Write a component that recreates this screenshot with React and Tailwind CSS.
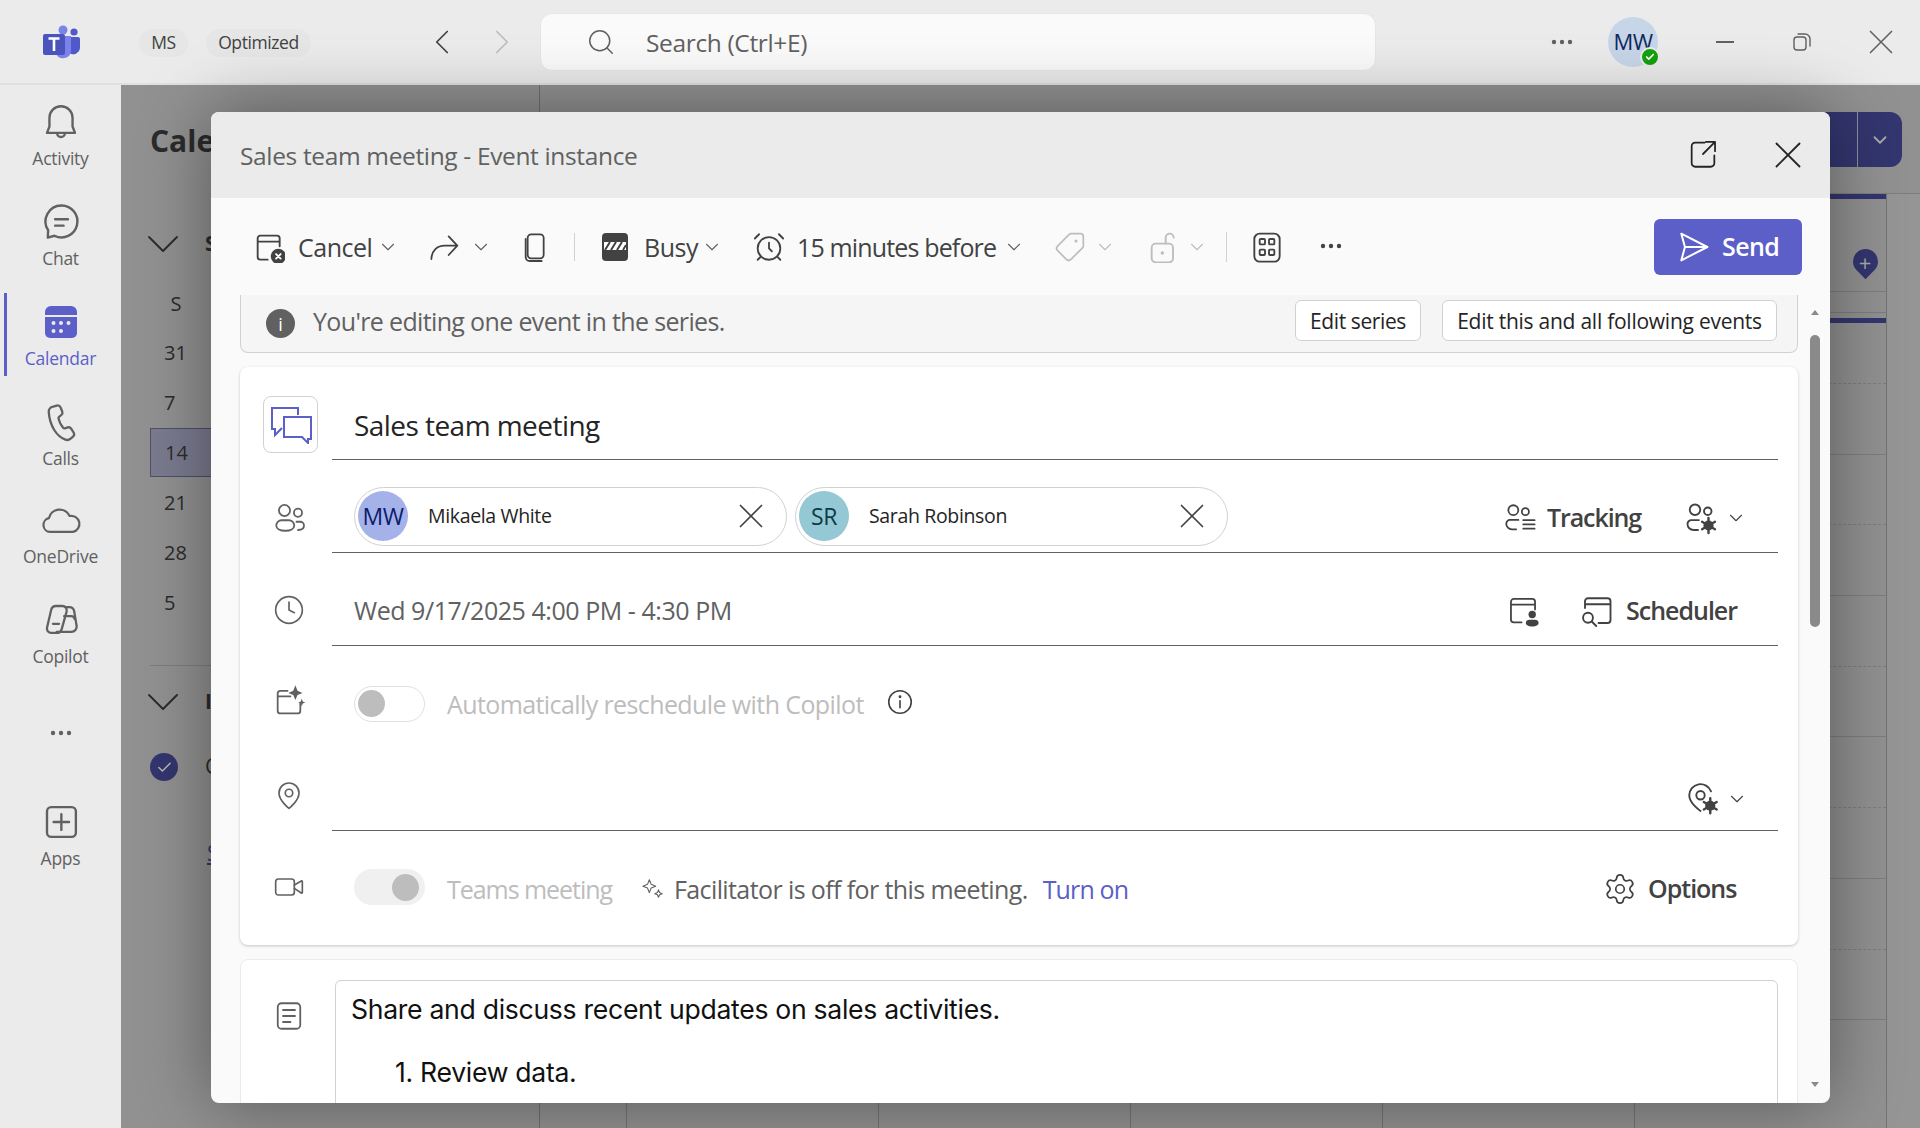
import { AlarmClock, Check, ChevronDown, ChevronLeft, ChevronRight, Clock, Search, Settings, Tag, Video, X } from "lucide-react";

const Svg = ({ size, h, className = "", sw = 1.5, vb = "0 0 24 24", children }) => (
  <svg width={size} height={h || size} viewBox={vb} fill="none" stroke="currentColor" strokeWidth={sw} strokeLinecap="round" strokeLinejoin="round" className={`shrink-0 ${className}`}>
    {children}
  </svg>
);

const Dots = ({ className = "" }) => (
  <svg width="24" height="6" viewBox="0 0 24 6" className={`shrink-0 ${className}`} fill="currentColor">
    <circle cx="4" cy="3" r="2.2" />
    <circle cx="12" cy="3" r="2.2" />
    <circle cx="20" cy="3" r="2.2" />
  </svg>
);

const TeamsLogo = () => (
  <svg width="38" height="34" viewBox="0 0 38 34" className="shrink-0">
    <circle cx="21" cy="5" r="4.5" fill="#7b83eb" />
    <circle cx="32" cy="7" r="3.6" fill="#5059c9" />
    <path d="M27 12h9a2 2 0 0 1 2 2v9a7 7 0 0 1-11 5Z" fill="#5059c9" />
    <path d="M14 11h15v15a8 8 0 0 1-15 3Z" fill="#7b83eb" />
    <rect x="1" y="9" width="22" height="21" rx="2" fill="#4b53bc" />
    <path d="M6.5 13.5h11M12 13.5V26" stroke="#fff" strokeWidth="2.6" fill="none" />
  </svg>
);

const navIcons = {
  Activity: (
    <Svg size={42} sw={1.35}>
      <path d="M12 3a6.6 6.6 0 0 0-6.6 6.6v5L4 18.2h16l-1.4-3.6v-5A6.6 6.6 0 0 0 12 3Z" />
      <path d="M9.8 18.4a2.2 2.2 0 0 0 4.4 0" />
    </Svg>
  ),
  Chat: (
    <Svg size={44} sw={1.3}>
      <path d="M12.3 3a8.7 8.7 0 1 1-3.9 16.5l-3.6 1 .2-4A8.7 8.7 0 0 1 12.3 3Z" />
      <path d="M8.8 10.5h7M8.8 14h4.6" />
    </Svg>
  ),
  Calendar: (
    <svg width="34" height="34" viewBox="0 0 34 34" className="shrink-0">
      <path d="M1 7a6 6 0 0 1 6-6h20a6 6 0 0 1 6 6v3H1Z" fill="#5b5fc7" />
      <path d="M1 12h32v16a5 5 0 0 1-5 5H6a5 5 0 0 1-5-5Z" fill="#5b5fc7" />
      <g fill="#ebebeb">
        <circle cx="9.5" cy="18" r="2" /><circle cx="17" cy="18" r="2" /><circle cx="24.5" cy="18" r="2" />
        <circle cx="9.5" cy="26" r="2" /><circle cx="17" cy="26" r="2" />
      </g>
    </svg>
  ),
  Calls: (
    <Svg size={42} sw={1.3}>
      <path d="M7.5 3.2 9.6 2.6a1.8 1.8 0 0 1 2.1 1l1 2.4a1.8 1.8 0 0 1-.5 2l-1.3 1.1a1 1 0 0 0-.3 1c.5 2 1.4 3.7 2.6 5.2a1 1 0 0 0 1 .3l1.6-.5a1.8 1.8 0 0 1 2 .7l1.4 2.2a1.8 1.8 0 0 1-.3 2.3l-1.4 1.2a3 3 0 0 1-3 .6C9.6 20.3 5.6 14.4 5 6.4a3 3 0 0 1 2.5-3.2Z" />
    </Svg>
  ),
  OneDrive: (
    <Svg size={44} sw={1.2}>
      <path d="M6 18.5a3.8 3.8 0 0 1-.6-7.5 6 6 0 0 1 11.3-1.2 4.4 4.4 0 0 1 1.8 8.7Z" />
    </Svg>
  ),
  Copilot: (
    <Svg size={42} sw={1.3}>
      <path d="M9.2 4h3.6a2.5 2.5 0 0 1 2.4 3.2L12.4 17.2a3 3 0 0 1-2.9 2.2H6.4A2.5 2.5 0 0 1 4 16.4L6.4 6.2A2.8 2.8 0 0 1 9.2 4Z" />
      <path d="M14.8 4.6h2a2.8 2.8 0 0 1 2.7 2.2l1.4 8.4a3 3 0 0 1-3 3.6H9.6" />
      <path d="M13.8 9.8h4a2 2 0 0 1 2 1.6M7.4 14.2h3.5" />
    </Svg>
  ),
  Apps: (
    <Svg size={42} sw={1.35}>
      <rect x="4" y="3.5" width="16.5" height="17" rx="2.4" />
      <path d="M12.2 7.5v9M7.8 12h8.8" />
    </Svg>
  ),
};

function NavItem({ label, active, h = "h-[100px]" }) {
  return (
    <div className={`relative flex ${h} flex-col items-center pt-[10px] ${active ? "text-[#5b5fc7]" : "text-[#616161]"}`}>
      {active && <div className="absolute left-[4px] top-0 h-[83px] w-[3px] bg-[#5b5fc7]" />}
      <div className="flex h-[38px] items-center justify-center">{navIcons[label]}</div>
      <div className="mt-[5px] text-[17.5px] leading-[24px] tracking-[-0.25px]">{label}</div>
    </div>
  );
}

function TitleBar() {
  return (
    <div className="flex h-[85px] shrink-0 items-center border-b-2 border-[#e0e0e0] bg-[#ebebeb] text-[#424242]">
      <div className="ml-[42px] w-[97px]"><TeamsLogo /></div>
      <div className="mt-[2px] flex h-[28px] w-[49px] items-center justify-center rounded-full bg-[#e6e6e6] text-[17.5px] tracking-[-0.4px]">MS</div>
      <div className="ml-[18px] mt-[2px] flex h-[28px] w-[105px] items-center justify-center rounded-full bg-[#e6e6e6] text-[17.5px] tracking-[-0.4px]">Optimized</div>
      <ChevronLeft size={42} strokeWidth={1} className="ml-[110px] shrink-0 text-[#424242]" />
      <ChevronRight size={42} strokeWidth={1} className="ml-[18px] shrink-0 text-[#bdbdbd]" />
      <div className="ml-[17px] flex h-[58px] w-[836px] items-center rounded-xl border border-[#e6e6e6] bg-[#fafafa]">
        <Search size={30} strokeWidth={1.2} className="ml-[45px] text-[#616161]" />
        <span className="ml-[30px] mt-[3px] text-[24.5px] tracking-[-0.35px] text-[#616161]">Search (Ctrl+E)</span>
      </div>
      <Dots className="ml-[174px] text-[#616161]" />
      <div className="relative ml-[34px] flex h-[50px] w-[50px] items-center justify-center rounded-full bg-[#c7d5e9] text-[22px] font-medium tracking-[-0.6px] text-[#0f2a5c]">
        MW
        <div className="absolute right-[-2px] bottom-[0px] flex h-[20px] w-[20px] items-center justify-center rounded-full border-2 border-[#ebebeb] bg-[#13a10e]">
          <Check size={10} strokeWidth={4} className="text-white" />
        </div>
      </div>
      <div className="ml-[58px] h-[2px] w-[18px] bg-[#616161]" />
      <Svg size={24} sw={1.4} className="ml-[56px] text-[#616161]">
        <rect x="4" y="7" width="12" height="13" rx="3" />
        <path d="M8 4h7a5 5 0 0 1 5 5v7" />
      </Svg>
      <X size={42} strokeWidth={0.95} className="ml-[46px] text-[#616161]" />
    </div>
  );
}

function BackCalendar() {
  const weeks = ["31", "7", "14", "21", "28", "5"];
  const slots = [0, 1, 2, 3, 4, 5, 6, 7, 8, 9];
  return (
    <div className="flex min-w-0 flex-1 bg-[#919191] text-[#2b2b2b]">
      <div className="w-[419px] shrink-0 border-r border-[#6f6f6f] pl-[29px] pt-[36px]">
        <div className="text-[30px] font-bold leading-[40px]">Calendar</div>
        <div className="mt-[65px] flex h-[36px] items-center">
          <ChevronDown size={56} strokeWidth={0.8} className="-ml-[15px] shrink-0" />
          <span className="ml-[14px] whitespace-nowrap text-[21px] font-bold">September 2025</span>
        </div>
        <div className="mt-[26px] w-[52px] text-center text-[20px] leading-[32px]">S</div>
        <div className="mt-[8px]">
          {weeks.map((w) => (
            <div key={w} className={`mt-[1px] flex h-[49px] w-[100px] items-center pl-[14px] text-[20px] ${w === "14" ? "border border-[#4f4f66] bg-[#7b7b90]" : ""}`}>{w}</div>
          ))}
        </div>
        <div className="mt-[38px] h-px w-[300px] bg-[#7d7d7d]" />
        <div className="mt-[18px] flex h-[36px] items-center">
          <ChevronDown size={56} strokeWidth={0.8} className="-ml-[15px] shrink-0" />
          <span className="ml-[14px] text-[21px] font-bold">Individual</span>
        </div>
        <div className="mt-[32px] flex h-[30px] items-center">
          <div className="flex h-[28px] w-[28px] items-center justify-center rounded-full bg-[#33366f]">
            <Check size={17} strokeWidth={2} className="text-[#b9b9b9]" />
          </div>
          <span className="ml-[27px] text-[21px]">Calendar</span>
        </div>
        <div className="ml-[57px] mt-[56px] text-[21px] text-[#33366f] underline">Show</div>
      </div>
      <div className="flex min-w-0 flex-1 flex-col">
        <div className="flex h-[108px] shrink-0 justify-end pr-[18px] pt-[27px]">
          <div className="flex h-[55px] w-[180px] rounded-r-xl bg-[#33366f]">
            <div className="flex-1 border-r border-[#8f8f9e]" />
            <div className="flex w-[44px] items-center justify-center">
              <ChevronDown size={22} strokeWidth={2} className="text-[#a9a9a9]" />
            </div>
          </div>
        </div>
        <div className="flex min-h-0 flex-1 border-t border-[#7d7d7d]">
          <div className="w-[86px] shrink-0" />
          {[0, 1, 2, 3, 4].map((c) => (
            <div key={c} className="relative w-[252px] shrink-0 border-l border-r-0 border-[#747474]">
              <div className="h-[5px] bg-[#33366f]" />
              <div className="absolute left-0 right-0 top-[97px] border-t border-[#7d7d7d]" />
              <div className="absolute left-0 right-0 top-[118px] h-[5px] border-t border-[#7d7d7d]" />
              <div className="absolute left-0 right-0 top-[124px] h-[5px] bg-[#33366f]" />
              {c === 4 && (
                <div className="absolute left-[218px] top-[55px] flex h-[25px] w-[25px] items-center justify-center rounded-full rounded-br-[3px] bg-[#33366f] rotate-45">
                  <span className="-rotate-45 text-[22px] leading-none text-[#a9a9a9]">+</span>
                </div>
              )}
              <div className="absolute left-0 right-0 top-[189px]">
                {slots.map((s) => (
                  <div key={s} className={`h-[70.7px] border-t border-[#7d7d7d] ${s % 2 === 0 ? "border-dashed" : "border-solid"}`} />
                ))}
              </div>
            </div>
          ))}
          <div className="flex-1 border-l border-[#747474] bg-[#959595]" />
        </div>
      </div>
    </div>
  );
}

const Chevron = ({ className = "" }) => <ChevronDown size={22} strokeWidth={1.2} className={`shrink-0 ${className}`} />;

function Toolbar() {
  return (
    <div className="flex h-[97px] shrink-0 items-center pl-[42px] pr-[28px] text-[#424242]">
      <Svg size={32} sw={1.4}>
        <path d="M11 21.5H5.5a2 2 0 0 1-2-2v-14a2 2 0 0 1 2-2H18a2 2 0 0 1 2 2v6M3.5 8h16.5" />
        <circle cx="19" cy="19" r="5" fill="#424242" stroke="#424242" />
        <path d="m17.3 17.3 3.4 3.4m0-3.4-3.4 3.4" stroke="#fff" strokeWidth="1.4" />
      </Svg>
      <span className="ml-[13px] mt-[2px] w-[72px] text-[25px] tracking-[-0.5px]">Cancel</span>
      <Chevron className="ml-[7px] text-[#616161]" />
      <Svg size={32} sw={1.35} className="ml-[29px]">
        <path d="M2.5 21c.4-6.4 4.4-10 10-10h9M15.5 4l6.5 7-6.5 7" />
      </Svg>
      <Chevron className="ml-[10px] text-[#616161]" />
      <Svg size={32} sw={1.35} className="ml-[27px]">
        <rect x="6.5" y="2.5" width="12" height="18" rx="2.6" />
        <path d="M5 6v13.5a3 3 0 0 0 3 3h9" />
      </Svg>
      <div className="ml-[23px] h-[28px] w-px bg-[#d1d1d1]" />
      <svg width="28" height="30" viewBox="0 0 28 30" className="ml-[26px] shrink-0">
        <rect x="1" y="1" width="26" height="28" rx="4" fill="#424242" />
        <rect x="3" y="10" width="22" height="8" fill="#fff" />
        <path d="m4 18 5-8M10 18l5-8M16 18l5-8M22 18l3-5" stroke="#424242" strokeWidth="2" />
      </svg>
      <span className="ml-[15px] mt-[2px] w-[52px] text-[25px] tracking-[-0.5px]">Busy</span>
      <Chevron className="ml-[5px] text-[#616161]" />
      <AlarmClock size={34} strokeWidth={1.3} className="ml-[29px] shrink-0" />
      <span className="ml-[11px] mt-[2px] w-[201px] whitespace-nowrap text-[25px] tracking-[-0.85px]">15 minutes before</span>
      <Chevron className="ml-[5px] text-[#616161]" />
      <Tag size={32} strokeWidth={1.3} className="ml-[29px] shrink-0 -scale-x-100 text-[#bdbdbd]" />
      <Chevron className="ml-[8px] text-[#bdbdbd]" />
      <Svg size={32} sw={1.4} className="ml-[31px] text-[#bdbdbd]">
        <rect x="3.5" y="9.5" width="16" height="14" rx="3" />
        <path d="M14 9.5V5a3 3 0 0 1 6 0" />
        <circle cx="11.5" cy="16.5" r=".6" fill="currentColor" />
      </Svg>
      <Chevron className="ml-[7px] text-[#bdbdbd]" />
      <div className="ml-[18px] h-[30px] w-px bg-[#d1d1d1]" />
      <Svg size={32} sw={1.4} className="ml-[24px]">
        <rect x="2.5" y="2" width="19" height="21" rx="4" />
        <rect x="6.5" y="6" width="4" height="4" rx=".7" />
        <rect x="13.5" y="6" width="4" height="4" rx=".7" />
        <rect x="6.5" y="14" width="4" height="4" rx=".7" />
        <rect x="13.5" y="14" width="4" height="4" rx=".7" />
      </Svg>
      <Dots className="ml-[36px] -mt-[2px]" />
      <button className="ml-auto flex h-[56px] w-[148px] items-center rounded-md bg-[#5b5fc7] pl-[24px] text-white">
        <Svg size={32} sw={1.5}>
          <path d="M2.5 2 22 12 2.5 22l2.7-10Z" />
          <path d="M5.2 12H22" />
        </Svg>
        <span className="ml-[12px] text-[25px] font-semibold tracking-[-0.6px]">Send</span>
      </button>
    </div>
  );
}

function Chip({ initials, name, color, text }) {
  return (
    <div className="flex h-[59px] w-[433px] shrink-0 items-center rounded-full border border-[#d1d1d1] pl-[3px] pr-[14px]">
      <div className={`flex h-[50px] w-[50px] items-center justify-center rounded-full text-[23px] font-medium tracking-[-0.5px] ${color} ${text}`}>{initials}</div>
      <span className="ml-[20px] flex-1 text-[19.5px] tracking-[-0.35px] text-[#242424]">{name}</span>
      <X size={42} strokeWidth={0.95} className="text-[#424242]" />
    </div>
  );
}

function Row({ icon, h, line, content = "", children, iconClass = "" }) {
  return (
    <div className={`flex ${h}`}>
      <div className={`flex w-[92px] shrink-0 justify-center pl-[6px] text-[#616161] ${iconClass}`}>{icon}</div>
      <div className={`flex min-w-0 flex-1 items-center ${content} ${line ? "border-b border-[#616161]" : ""}`}>{children}</div>
    </div>
  );
}

const GearBadge = ({ x, y }) => (
  <g transform={`translate(${x} ${y})`}>
    <circle r="3.4" fill="#424242" stroke="none" />
    <circle r="1.1" fill="#fff" stroke="none" />
    <path d="M0-5V5M-4.3-2.5 4.3 2.5M-4.3 2.5 4.3-2.5" stroke="#424242" strokeWidth="1.6" />
  </g>
);

function MainCard() {
  return (
    <div className="mt-[14px] rounded-lg bg-white pb-[1px] shadow-[0_1px_3px_rgba(0,0,0,0.22)] mr-[32px]">
      <div className="pr-[20px] pt-[9px]">
        <div className="flex h-[84px]">
          <div className="flex w-[92px] shrink-0 pl-[23px] pt-[20px]">
            <div className="flex h-[57px] w-[55px] items-center justify-center rounded-lg border border-[#d1d1d1] text-[#5b5fc7]">
              <svg width="42" height="38" viewBox="0 0 42 38" fill="none" stroke="currentColor" strokeWidth="2" className="shrink-0">
                <path d="M28 9V2H2v21h3v6l7-7" />
                <path d="M14 11h27v22h-3v4l-6-6H14Z" fill="#fff" />
              </svg>
            </div>
          </div>
          <div className="flex min-w-0 flex-1 items-center border-b border-[#616161] pl-[22px] pt-[15px]">
            <span className="text-[28px] tracking-[-0.55px] text-[#242424]">Sales team meeting</span>
          </div>
        </div>
        <Row h="h-[93px]" line content="pt-[20px]" iconClass="pt-[40px]" icon={
          <Svg size={36} sw={1.2}>
            <circle cx="9" cy="7" r="3.7" /><circle cx="18" cy="8.5" r="2.7" />
            <path d="M3.5 17a3.5 3.5 0 0 1 3.5-3.5h5a3.5 3.5 0 0 1 3.5 3.5c0 2.2-2.6 3.5-6 3.5s-6-1.3-6-3.5ZM18 20c2.2 0 4-1 4-3a2.5 2.5 0 0 0-2.5-2.5H17" />
          </Svg>
        }>
          <div className="ml-[22px] flex gap-[8px]">
            <Chip initials="MW" name="Mikaela White" color="bg-[#a4b2e9]" text="text-[#0b1c6b]" />
            <Chip initials="SR" name="Sarah Robinson" color="bg-[#94c8d4]" text="text-[#0b3c47]" />
          </div>
          <div className="ml-auto mr-[31px] mt-[4px] flex items-center text-[#424242]">
            <Svg size={34} sw={1.25}>
              <circle cx="8" cy="6.5" r="3.5" /><circle cx="16.5" cy="7.5" r="2.5" />
              <path d="M10 20H7a4 4 0 0 1-4-4 2.6 2.6 0 0 1 2.6-2.6h6M15 13.5h8M15 16.5h8M15 19.5h8" />
            </Svg>
            <span className="ml-[11px] w-[95px] whitespace-nowrap text-[25px] font-semibold tracking-[-1.1px]">Tracking</span>
            <Svg size={36} sw={1.25} className="ml-[41px]">
              <circle cx="8" cy="6.5" r="3.5" /><circle cx="16.5" cy="7.5" r="2.5" />
              <path d="M10 20H7a4 4 0 0 1-4-4 2.6 2.6 0 0 1 2.6-2.6h5" />
              <GearBadge x={17} y={17} />
            </Svg>
            <Chevron className="ml-[6px]" />
          </div>
        </Row>
        <Row h="h-[93px]" line content="pt-[23px]" iconClass="pt-[41px]" icon={<Clock size={32} strokeWidth={1.25} />}>
          <span className="ml-[22px] text-[25px] tracking-[-0.45px] text-[#616161]">Wed 9/17/2025 4:00 PM - 4:30 PM</span>
          <div className="ml-auto mr-[39px] flex items-center text-[#424242]">
            <Svg size={34} sw={1.25}>
              <path d="M11 20H5.5a2 2 0 0 1-2-2V5.5a2 2 0 0 1 2-2h13a2 2 0 0 1 2 2V11M3.5 7.5h17" />
              <circle cx="18.5" cy="14.5" r="2.6" fill="#424242" stroke="none" />
              <path d="M14 20.5c0-1.6 1.2-2.3 2.6-2.3h3.8c1.4 0 2.6.7 2.6 2.3S21 23 18.5 23 14 22 14 20.5Z" fill="#424242" stroke="none" />
            </Svg>
            <Svg size={36} sw={1.25} className="ml-[39px]">
              <path d="M4 10V5.5a2 2 0 0 1 2-2h13a2 2 0 0 1 2 2V18a2 2 0 0 1-2 2h-6M4 7.5h17" />
              <circle cx="6" cy="16.5" r="3.3" />
              <path d="m8.5 19 3 3" />
            </Svg>
            <span className="ml-[11px] w-[113px] whitespace-nowrap text-[25px] font-semibold tracking-[-1px]">Scheduler</span>
          </div>
        </Row>
        <Row h="h-[95px]" content="pt-[20px]" iconClass="pt-[37px]" icon={
          <Svg size={34} sw={1.25}>
            <path d="M11 5.5H6a2 2 0 0 0-2 2v12a2 2 0 0 0 2 2h12a2 2 0 0 0 2-2v-5M4 9.5h9" />
            <path d="M16.5 1.5 18 5.5l3.5 1.5L18 8.5 16.5 12 15 8.5 11.5 7 15 5.5ZM21 11l.7 2 1.8.7-1.8.7-.7 2-.7-2-1.8-.7 1.8-.7Z" fill="#616161" stroke="none" />
          </Svg>
        }>
          <div className="ml-[22px] flex h-[36px] w-[71px] items-center rounded-full border border-[#e0e0e0] pl-[3px]">
            <div className="h-[27px] w-[27px] rounded-full bg-[#bdbdbd]" />
          </div>
          <span className="ml-[22px] mt-[2px] text-[25px] tracking-[-0.6px] text-[#bdbdbd]">Automatically reschedule with Copilot</span>
          <Svg size={30} sw={1.3} className="ml-[21px] -mt-[4px] text-[#424242]">
            <circle cx="12" cy="12" r="9" />
            <path d="M12 11v5.5" />
            <circle cx="12" cy="7.8" r=".5" fill="currentColor" />
          </Svg>
        </Row>
        <Row h="h-[90px]" line iconClass="pt-[38px]" icon={
          <Svg size={32} sw={1.25}>
            <path d="M12 22s-7.5-5.6-7.5-11.5a7.5 7.5 0 0 1 15 0C19.5 16.4 12 22 12 22Z" />
            <circle cx="12" cy="10.5" r="2.8" />
          </Svg>
        }>
          <div className="ml-auto mr-[30px] mt-[26px] flex items-center text-[#424242]">
            <Svg size={36} sw={1.25}>
              <path d="M11 20S3.5 15 3.5 9.5a7.5 7.5 0 0 1 14.5-2.6" />
              <circle cx="11" cy="9.5" r="2.8" />
              <GearBadge x={17.5} y={16.5} />
            </Svg>
            <Chevron className="ml-[6px]" />
          </div>
        </Row>
        <Row h="h-[113px]" iconClass="pt-[40px]" icon={<Video size={32} strokeWidth={1.25} />}>
          <div className="ml-[22px] -mt-[1px] flex h-[36px] w-[71px] items-center justify-end rounded-full bg-[#f0f0f0] pr-[6px]">
            <div className="h-[27px] w-[27px] rounded-full bg-[#bdbdbd]" />
          </div>
          <span className="ml-[22px] mt-[4px] text-[25px] tracking-[-1.05px] text-[#bdbdbd]">Teams meeting</span>
          <Svg size={22} sw={1.2} className="ml-[30px] text-[#616161]">
            <path d="m8 3 2 5 5 2-5 2-2 5-2-5-5-2 5-2ZM18 14l1.2 3 2.8 1.2-2.8 1.2L18 22l-1.2-2.6-2.8-1.2 2.8-1.2Z" />
          </Svg>
          <span className="ml-[10px] mt-[4px] text-[25px] tracking-[-0.6px] text-[#616161]">Facilitator is off for this meeting.</span>
          <span className="ml-[15px] mt-[4px] text-[25px] tracking-[-0.85px] text-[#5b5fc7]">Turn on</span>
          <div className="ml-auto mr-[40px] mt-[2px] flex items-center text-[#424242]">
            <Settings size={34} strokeWidth={1.2} />
            <span className="ml-[11px] w-[90px] whitespace-nowrap text-[25px] font-semibold tracking-[-1px]">Options</span>
          </div>
        </Row>
      </div>
    </div>
  );
}

function Dialog() {
  return (
    <div className="absolute left-[211px] top-[112px] flex h-[991px] w-[1619px] flex-col overflow-hidden rounded-lg bg-[#fafafa] shadow-[0_0_70px_rgba(0,0,0,0.4)]">
      <div className="flex h-[86px] shrink-0 items-center bg-[#ebebeb] pl-[29px] text-[#242424]">
        <span className="mt-[2px] text-[24.5px] tracking-[-0.35px] text-[#616161]">Sales team meeting - Event instance</span>
        <Svg size={34} sw={1.25} className="ml-auto -mt-[2px]">
          <path d="M13 4H6.5A2.5 2.5 0 0 0 4 6.5v12A2.5 2.5 0 0 0 6.5 21h11a2.5 2.5 0 0 0 2.5-2.5V13M14 3.5h6.5V10M20.5 3.5 12 12" />
        </Svg>
        <X size={46} strokeWidth={0.95} className="ml-[45px] mr-[19px]" />
      </div>
      <Toolbar />
      <div className="relative min-h-0 flex-1 overflow-hidden pl-[29px]">
        <div className="mr-[32px] flex h-[58px] items-center rounded-b-lg border border-t-0 border-[#d1d1d1] bg-[#f5f5f5] pl-[25px] pr-[20px]">
          <div className="flex h-[29px] w-[29px] items-center justify-center rounded-full bg-[#616161] text-[18px] leading-none text-white">i</div>
          <span className="ml-[18px] -mt-[3px] text-[25px] tracking-[-0.65px] text-[#616161]">You're editing one event in the series.</span>
          <button className="ml-auto -mt-[6px] flex h-[41px] w-[126px] items-center justify-center rounded-md border border-[#d1d1d1] bg-white pt-[3px] text-[21px] tracking-[-0.4px] text-[#242424]">Edit series</button>
          <button className="ml-[21px] -mt-[6px] flex h-[41px] w-[335px] items-center justify-center whitespace-nowrap rounded-md border border-[#d1d1d1] bg-white pt-[3px] text-[21px] tracking-[-0.25px] text-[#242424]">Edit this and all following events</button>
        </div>
        <MainCard />
        <div className="mr-[32px] mt-[14px] flex h-[200px] rounded-lg border border-[#ebebeb] bg-white pt-[20px]">
          <div className="flex w-[94px] shrink-0 justify-center pl-[2px] pt-[18px] text-[#616161]">
            <Svg size={36} sw={1.2}>
              <rect x="4.5" y="3.5" width="15" height="17" rx="2.5" />
              <path d="M8 8h8M8 12h8M8 16h5" />
            </Svg>
          </div>
          <div className="mr-[19px] flex-1 rounded-t-md border border-[#d1d1d1] pl-[15px] pt-[10px] font-['Inter',sans-serif] text-[26.6px] leading-[37px] tracking-[-0.3px] text-[#111]">
            <div>Share and discuss recent updates on sales activities.</div>
            <div className="mt-[26px] pl-[44px]">1. Review data.</div>
          </div>
        </div>
        <div className="absolute right-[10px] top-0 bottom-0 w-[10px]">
          <div className="absolute left-[1px] top-[15px] h-0 w-0 border-x-[4px] border-b-[5px] border-x-transparent border-b-[#8a8a8a]" />
          <div className="absolute left-0 top-[40px] h-[292px] w-[10px] rounded-full bg-[#8a8a8a]" />
          <div className="absolute left-[1px] bottom-[16px] h-0 w-0 border-x-[4px] border-t-[5px] border-x-transparent border-t-[#8a8a8a]" />
        </div>
      </div>
    </div>
  );
}

export default function App() {
  return (
    <div className="relative flex h-[1128px] w-[1920px] flex-col overflow-hidden font-['Open_Sans',sans-serif]">
      <TitleBar />
      <div className="flex min-h-0 flex-1">
        <div className="w-[121px] shrink-0 bg-[#ebebeb] pt-[8px]">
          <NavItem label="Activity" />
          <NavItem label="Chat" />
          <NavItem label="Calendar" active />
          <NavItem label="Calls" h="h-[98px]" />
          <NavItem label="OneDrive" />
          <NavItem label="Copilot" />
          <div className="flex h-[102px] justify-center pt-[39px] text-[#616161]"><Dots /></div>
          <NavItem label="Apps" />
        </div>
        <BackCalendar />
      </div>
      <Dialog />
    </div>
  );
}
